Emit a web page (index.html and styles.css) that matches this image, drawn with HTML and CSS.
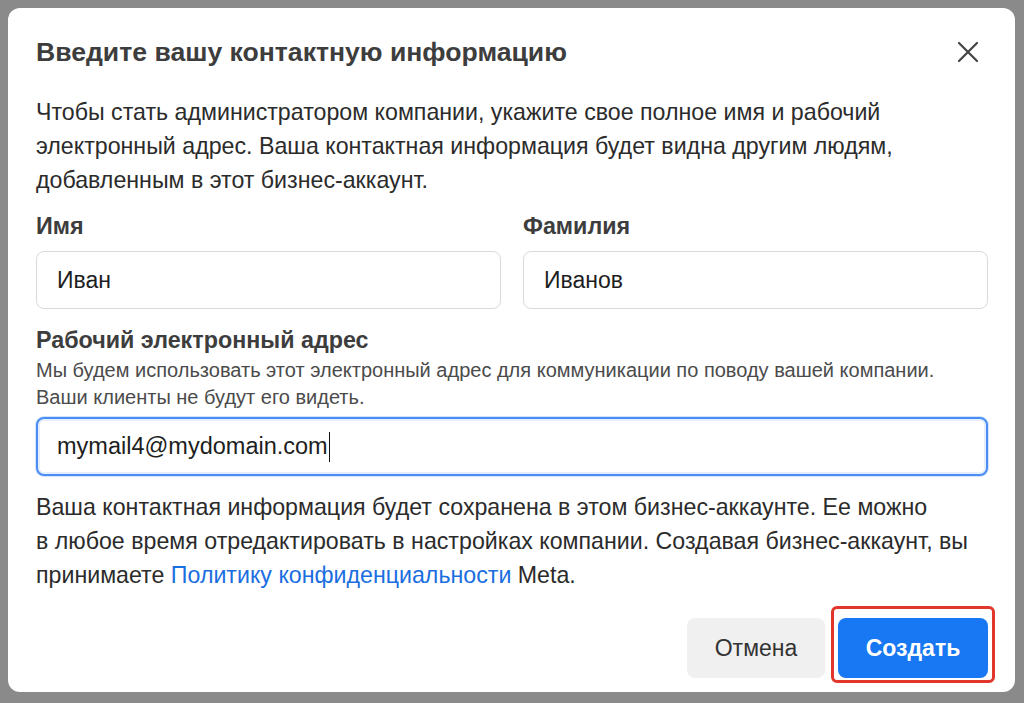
FILE: index.html
```html
<!DOCTYPE html>
<html lang="ru">
<head>
  <meta charset="UTF-8">
  <meta name="viewport" content="width=device-width, initial-scale=1.0">
  <title>Контактная информация</title>
  <link rel="stylesheet" href="styles.css">
</head>
<body>

  <div class="dialog">
    <div class="dialog-header">
      <h1>Введите вашу контактную информацию</h1>
      <button class="close-btn" aria-label="Закрыть">
        <svg width="22" height="22" viewBox="0 0 22 22">
          <path d="M2 2 L20 20 M20 2 L2 20" stroke="#444" stroke-width="2.2" stroke-linecap="round" fill="none"/>
        </svg>
      </button>
    </div>

    <p class="intro">Чтобы стать администратором компании, укажите свое полное имя и&nbsp;рабочий электронный адрес. Ваша контактная информация будет видна другим людям, добавленным в&nbsp;этот бизнес-аккаунт.</p>

    <div class="name-row">
      <div class="field-group">
        <label for="firstName">Имя</label>
        <input type="text" id="firstName" value="Иван">
      </div>
      <div class="field-group">
        <label for="lastName">Фамилия</label>
        <input type="text" id="lastName" value="Иванов">
      </div>
    </div>

    <div class="email-group">
      <label>Рабочий электронный адрес</label>
      <p class="hint">Мы будем использовать этот электронный адрес для коммуникации по поводу вашей компании. Ваши клиенты не будут его видеть.</p>
      <div class="text-field focused">mymail4@mydomain.com<span class="caret"></span></div>
    </div>

    <p class="note">Ваша контактная информация будет сохранена в&nbsp;этом бизнес-аккаунте. Ее можно в&nbsp;любое время отредактировать в&nbsp;настройках компании. Создавая бизнес-аккаунт, вы принимаете <a href="#">Политику конфиденциальности</a> Meta.</p>

    <div class="dialog-footer">
      <button class="btn btn-cancel">Отмена</button>
      <span class="highlight">
        <button class="btn btn-primary">Создать</button>
      </span>
    </div>
  </div>

</body>
</html>
```

FILE: styles.css
```css
html, body {
  margin: 0;
  height: 703px;
  overflow: hidden;
}
body {
  font-family: "Liberation Sans", Arial, sans-serif;
  background-color: #8a8a8a;
  padding: 8px 9px 0 8px;
  box-sizing: border-box;
  color: #2b2b2b;
}
.dialog {
  background: #fff;
  border-radius: 12px;
  height: 684px;
  box-sizing: border-box;
  padding: 18px 27px 0 28px;
}
.dialog-header {
  display: flex;
  align-items: center;
  justify-content: space-between;
  height: 52px;
}
h1 {
  font-size: 26.6px;
  font-weight: bold;
  color: #3d3d3d;
  margin: 0;
}
.close-btn {
  background: none;
  border: none;
  padding: 0;
  width: 22px;
  height: 22px;
  margin-right: 9px;
  cursor: pointer;
}
.intro, .note {
  font-size: 23.2px;
  line-height: 34px;
  margin: 17px 0 0;
}
.name-row {
  display: flex;
  gap: 22px;
  margin-top: 16px;
}
.field-group {
  flex: 1;
  min-width: 0;
}
label {
  display: block;
  font-size: 23.3px;
  font-weight: bold;
  line-height: 26px;
  color: #3d3d3d;
}
input, .text-field {
  display: block;
  width: 100%;
  height: 58px;
  margin-top: 12px;
  padding: 0 20px;
  border: 1px solid #d8dade;
  border-radius: 8px;
  box-sizing: border-box;
  font-family: inherit;
  font-size: 23px;
  color: #1c1e21;
  background: #fff;
  outline: none;
}
.email-group {
  margin-top: 18px;
}
.hint {
  font-size: 20px;
  line-height: 27px;
  color: #4b4b4b;
  margin: 4px 0 0;
  padding-right: 30px;
}
.text-field {
  display: flex;
  align-items: center;
  height: 59px;
  margin-top: 6px;
  padding-left: 19px;
  font-size: 23.5px;
}
.text-field.focused {
  border: 2px solid #4a8df3;
  box-shadow: 0 0 0 1px #d3e3fb, inset 0 0 0 2px #e4eefd;
}
.caret {
  display: inline-block;
  width: 1.5px;
  height: 30px;
  background: #111;
  margin-left: 1px;
}
.note {
  margin-top: 14px;
}
.note a {
  color: #1b6ee0;
  text-decoration: none;
}
.dialog-footer {
  display: flex;
  justify-content: flex-end;
  gap: 13px;
  margin-top: 26px;
}
.btn {
  height: 60px;
  border: none;
  border-radius: 8px;
  font-family: inherit;
  font-size: 23px;
  cursor: pointer;
}
.btn-cancel {
  width: 138px;
  background: #f0f0f0;
  color: #333;
}
.btn-primary {
  width: 150px;
  background: #1877f2;
  color: #fff;
  font-weight: bold;
  display: block;
}
.highlight {
  position: relative;
  display: block;
}
.highlight::after {
  content: "";
  position: absolute;
  left: -7px;
  right: -7px;
  top: -12px;
  bottom: -5px;
  border: 3px solid #e2352b;
  border-radius: 6px;
  pointer-events: none;
}
```
